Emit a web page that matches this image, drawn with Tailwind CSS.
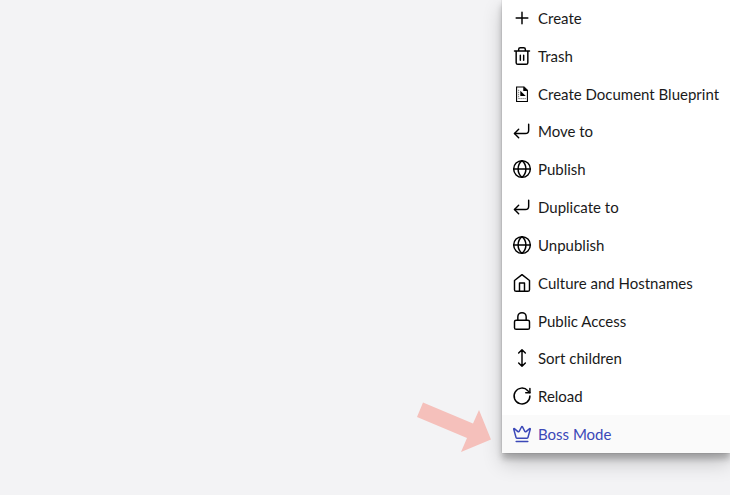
<!DOCTYPE html>
<html lang="en">
<head>
    <meta charset="UTF-8">
    <title>Content actions</title>
    <script src="https://cdn.jsdelivr.net/npm/@tailwindcss/browser@4"></script>
</head>
<body class="min-h-screen overflow-hidden bg-[#f3f3f5] font-['Lato',sans-serif] text-[15px] leading-5 text-[#1a1a1a]">
    <div class="relative -mt-px flex justify-end">
        <!-- Actions menu -->
        <ul class="relative flex min-h-[454px] w-[228px] flex-col rounded-b-xs bg-white shadow-[0_10px_20px_rgba(0,0,0,0.19),0_6px_6px_rgba(0,0,0,0.23),0_0_1px_rgba(0,0,0,0.5)]">
            <li class="flex flex-1">
                <button type="button" class="flex w-full items-center gap-1.5 px-2.5">
                    <svg class="size-5 text-black" viewBox="0 0 24 24" fill="none" stroke="currentColor" stroke-width="1.75" stroke-linecap="round" stroke-linejoin="round"><path d="M5 12h14M12 5v14"/></svg>
                    Create
                </button>
            </li>
            <li class="flex flex-1">
                <button type="button" class="flex w-full items-center gap-1.5 px-2.5">
                    <svg class="size-5 text-black" viewBox="0 0 24 24" fill="none" stroke="currentColor" stroke-width="1.75" stroke-linecap="round" stroke-linejoin="round"><path d="M3 6h18M5 6v14a2 2 0 0 0 2 2h10a2 2 0 0 0 2-2V6M8 6V4a2 2 0 0 1 2-2h4a2 2 0 0 1 2 2v2M10 11v6M14 11v6"/></svg>
                    Trash
                </button>
            </li>
            <li class="flex flex-1">
                <button type="button" class="flex w-full items-center gap-1.5 px-2.5">
                    <svg class="size-5 text-black" viewBox="0 0 24 24" fill="none" stroke="currentColor" stroke-width="1.3">
                        <path d="M5.5 3.5h9l4 4V21h-13z"/>
                        <path d="M13.5 3v5.500h5.500z" fill="currentColor" stroke="none"/>
                        <path d="M10 8v6.500h6.500z" fill="currentColor" stroke="none"/>
                        <path d="M8 7v10M8 17.500h9" stroke-width="1" stroke-dasharray="1 1.400"/>
                    </svg>
                    Create Document Blueprint
                </button>
            </li>
            <li class="flex flex-1">
                <button type="button" class="flex w-full items-center gap-1.5 px-2.5">
                    <svg class="size-5 text-black" viewBox="0 0 24 24" fill="none" stroke="currentColor" stroke-width="1.75" stroke-linecap="round" stroke-linejoin="round"><path d="m8 10-5 5 5 5"/><path d="M20 4v7a4 4 0 0 1-4 4H3"/></svg>
                    Move to
                </button>
            </li>
            <li class="flex flex-1">
                <button type="button" class="flex w-full items-center gap-1.5 px-2.5">
                    <svg class="size-5 text-black" viewBox="0 0 24 24" fill="none" stroke="currentColor" stroke-width="1.75" stroke-linecap="round" stroke-linejoin="round"><circle cx="12" cy="12" r="10"/><path d="M12 2a13 13 0 0 0 0 20 13 13 0 0 0 0-20M2 12h20"/></svg>
                    Publish
                </button>
            </li>
            <li class="flex flex-1">
                <button type="button" class="flex w-full items-center gap-1.5 px-2.5">
                    <svg class="size-5 text-black" viewBox="0 0 24 24" fill="none" stroke="currentColor" stroke-width="1.75" stroke-linecap="round" stroke-linejoin="round"><path d="m8 10-5 5 5 5"/><path d="M20 4v7a4 4 0 0 1-4 4H3"/></svg>
                    Duplicate to
                </button>
            </li>
            <li class="flex flex-1">
                <button type="button" class="flex w-full items-center gap-1.5 px-2.5">
                    <svg class="size-5 text-black" viewBox="0 0 24 24" fill="none" stroke="currentColor" stroke-width="1.75" stroke-linecap="round" stroke-linejoin="round"><circle cx="12" cy="12" r="10"/><path d="M12 2a13 13 0 0 0 0 20 13 13 0 0 0 0-20M2 12h20"/></svg>
                    Unpublish
                </button>
            </li>
            <li class="flex flex-1">
                <button type="button" class="flex w-full items-center gap-1.5 px-2.5">
                    <svg class="size-5 text-black" viewBox="0 0 24 24" fill="none" stroke="currentColor" stroke-width="1.75" stroke-linecap="round" stroke-linejoin="round"><path d="m3 9 9-7 9 7v11a2 2 0 0 1-2 2H5a2 2 0 0 1-2-2z"/><path d="M9 22V12h6v10"/></svg>
                    Culture and Hostnames
                </button>
            </li>
            <li class="flex flex-1">
                <button type="button" class="flex w-full items-center gap-1.5 px-2.5">
                    <svg class="size-5 text-black" viewBox="0 0 24 24" fill="none" stroke="currentColor" stroke-width="1.75" stroke-linecap="round" stroke-linejoin="round"><rect x="3" y="11" width="18" height="11" rx="2"/><path d="M7 11V7a5 5 0 0 1 10 0v4"/></svg>
                    Public Access
                </button>
            </li>
            <li class="flex flex-1">
                <button type="button" class="flex w-full items-center gap-1.5 px-2.5">
                    <svg class="size-5 text-black" viewBox="0 0 24 24" fill="none" stroke="currentColor" stroke-width="1.75" stroke-linecap="round" stroke-linejoin="round"><path d="m8 18 4 4 4-4M8 6l4-4 4 4M12 2v20"/></svg>
                    Sort children
                </button>
            </li>
            <li class="flex flex-1">
                <button type="button" class="flex w-full items-center gap-1.5 px-2.5">
                    <svg class="size-5 text-black" viewBox="0 0 24 24" fill="none" stroke="currentColor" stroke-width="1.75" stroke-linecap="round" stroke-linejoin="round"><path d="M21.500 12a9.500 9.500 0 1 1-2.500-6.400L21.500 8"/><path d="M21.500 3v5h-5"/></svg>
                    Reload
                </button>
            </li>
            <li class="flex flex-1 bg-[#fafafa] text-[#3b48b8]">
                <button type="button" class="flex w-full items-center gap-1.5 px-2.5">
                    <svg class="size-5" viewBox="0 0 24 24" fill="none" stroke="currentColor" stroke-width="1.75" stroke-linecap="round" stroke-linejoin="round"><path d="M11.562 3.266a.5.5 0 0 1 .876 0L15.390 8.870a1 1 0 0 0 1.516.294L21.183 5.500a.5.5 0 0 1 .798.519l-2.834 10.246a1 1 0 0 1-.956.734H5.810a1 1 0 0 1-.957-.734L2.020 6.020a.5.5 0 0 1 .798-.519l4.276 3.664a1 1 0 0 0 1.516-.294zM5 21h14"/></svg>
                    Boss Mode
                </button>
            </li>
        </ul>

        <!-- Pointer arrow -->
        <svg class="absolute top-[401px] right-[236px] h-[54px] w-[80px]" viewBox="0 0 80 54" fill="#f5c0bb">
            <path d="M9 2.500 3 17 53 38 47 52 77 39.500 65 10 59 23.500Z"/>
        </svg>
    </div>
</body>
</html>
